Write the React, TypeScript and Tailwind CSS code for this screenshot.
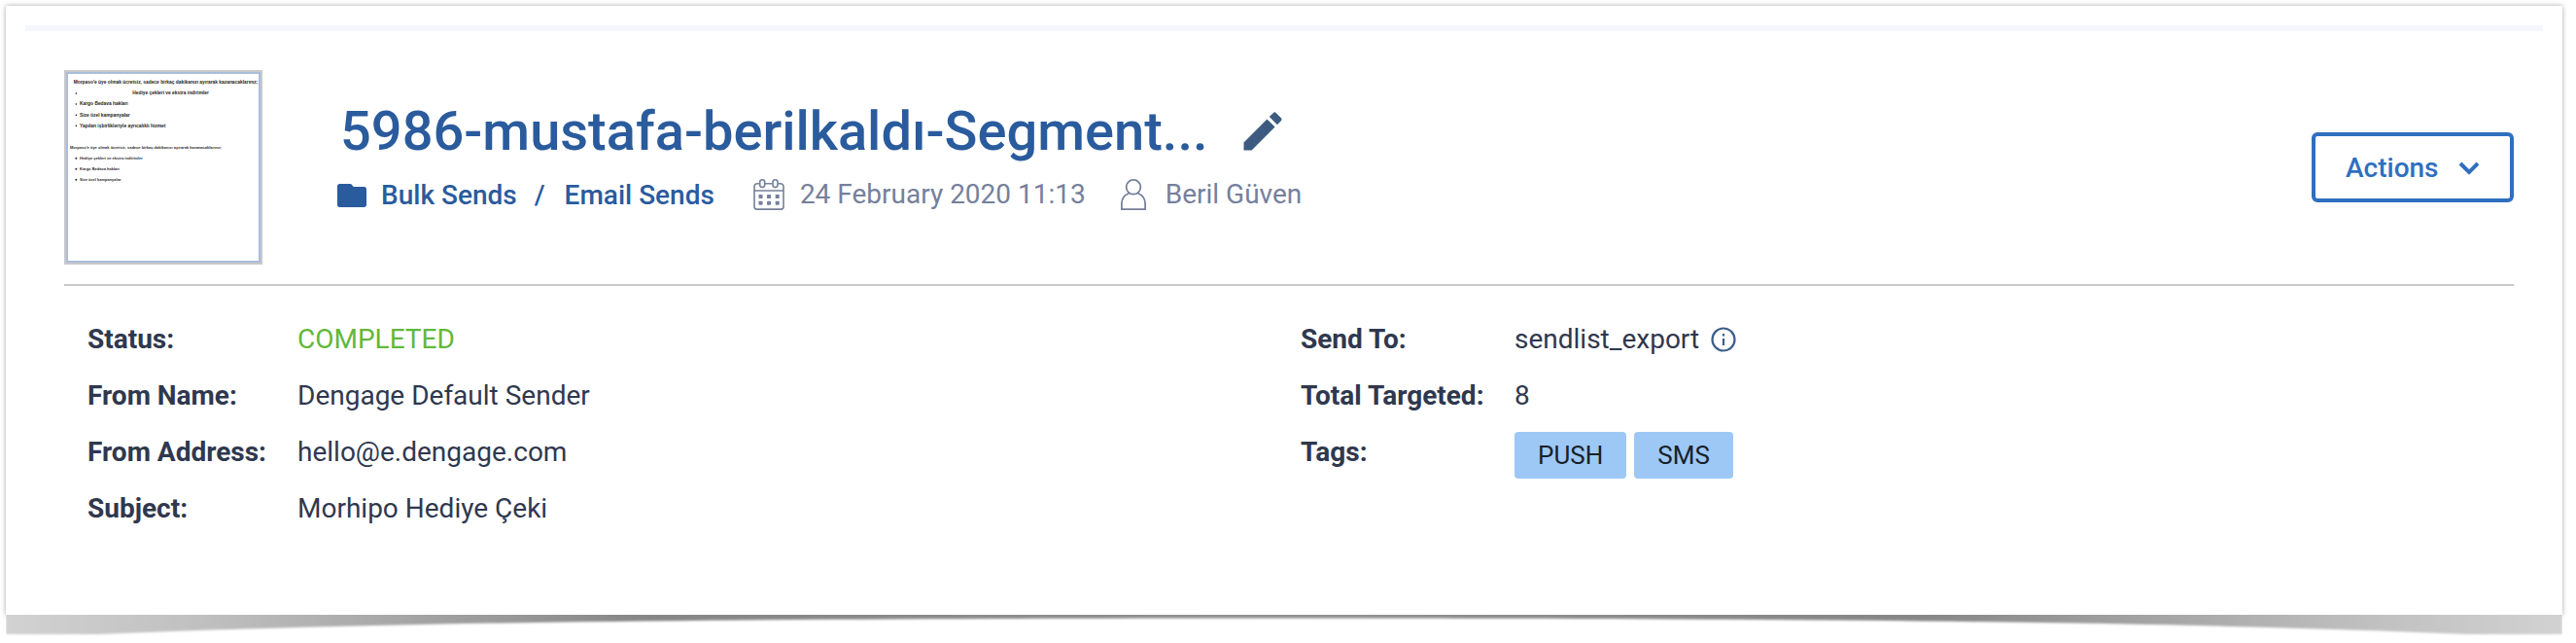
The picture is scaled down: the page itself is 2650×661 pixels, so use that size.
import type { ReactNode } from 'react';

const bulletsTop = [
  { y: 97, text: 'Kargo Bedava hakları' },
  { y: 131, text: 'Size özel kampanyalar' },
  { y: 164, text: 'Yapılan işbirlikleriyle ayrıcalıklı hizmet' },
];

const bulletsBottom = [
  { y: 264, text: 'Hediye çekleri ve ekstra indirimler' },
  { y: 297, text: 'Kargo Bedava hakları' },
  { y: 330, text: 'Size özel kampanyalar' },
];

function EmailThumbnail() {
  return (
    <div className="shrink-0 border-2 border-[#c9c9c9]">
      <svg
        viewBox="0 0 588 576"
        className="block h-[196px] w-[200px] border-2 border-[#a9bedb] bg-white font-['Liberation_Sans',sans-serif]"
        role="img"
        aria-label="Email preview"
      >
        <g fill="#1c1c1c" fontWeight="700" fontSize="14.6">
          <text x="17" y="30">Morpaso'e üye olmak ücretsiz, sadece birkaç dakikanızı ayırarak kazanacaklarınız;</text>
          <circle cx="25" cy="60" r="2.5" />
          <text x="199" y="63">Hediye çekleri ve ekstra indirimler</text>
          {bulletsTop.map((b) => (
            <g key={b.text}>
              <circle cx="25" cy={b.y - 4} r="2.5" />
              <text x="36" y={b.y}>{b.text}</text>
            </g>
          ))}
        </g>
        <g fill="#2c2c2c" fontWeight="700" fontSize="12">
          <text x="6" y="230">Morpaso'e üye olmak ücretsiz, sadece birkaç dakikanızı ayırarak kazanacaklarınız;</text>
          {bulletsBottom.map((b) => (
            <g key={b.text}>
              <circle cx="25" cy={b.y - 4} r="3" />
              <text x="36" y={b.y}>{b.text}</text>
            </g>
          ))}
        </g>
      </svg>
    </div>
  );
}

function PencilIcon() {
  return (
    <svg viewBox="0 0 24 24" className="size-[52px]" fill="#3d5b80" aria-hidden="true">
      <path d="M3 17.25V21h3.75L17.81 9.94l-3.75-3.75L3 17.25zM20.71 7.04a1 1 0 0 0 0-1.41l-2.34-2.34a1 1 0 0 0-1.41 0l-1.83 1.83 3.75 3.75 1.83-1.83z" />
    </svg>
  );
}

function FolderIcon() {
  return (
    <svg viewBox="0 0 24 24" className="size-9" fill="currentColor" aria-hidden="true">
      <path d="M3.6 4h7.2c.5 0 .9.2 1.2.6l1.1 1.4h7.3c.9 0 1.6.7 1.6 1.6v10.8c0 .9-.7 1.6-1.6 1.6H3.6c-.9 0-1.6-.7-1.6-1.6V5.6C2 4.700 2.700 4 3.600 4z" />
    </svg>
  );
}

function CalendarIcon() {
  return (
    <svg viewBox="0 0 32 32" className="size-8" fill="none" stroke="currentColor" strokeWidth="1.6" aria-hidden="true">
      <path d="M6.700 4.700H4a3 3 0 0 0-3 3V28.500a2.600 2.600 0 0 0 2.600 2.600h24.800a2.600 2.600 0 0 0 2.600-2.600V7.700a3 3 0 0 0-3-3h-2.700M12 4.700h7.700M1 12h30" />
      <rect x="6.700" y=".8" width="5" height="7.800" rx="2.500" />
      <rect x="20" y=".8" width="5" height="7.800" rx="2.500" />
      <g fill="currentColor" stroke="none">
        <rect x="5.500" y="16" width="4" height="4" rx=".6" />
        <rect x="14" y="16" width="4" height="4" rx=".6" />
        <rect x="22.700" y="16" width="4" height="4" rx=".6" />
        <rect x="5.500" y="22.700" width="4" height="4" rx=".6" />
        <rect x="14" y="22.700" width="4" height="4" rx=".6" />
        <rect x="22.700" y="22.700" width="4" height="4" rx=".6" />
      </g>
    </svg>
  );
}

function PersonIcon() {
  return (
    <svg viewBox="0 0 26 32" className="h-8 w-[26px]" fill="none" stroke="currentColor" strokeWidth="1.8" aria-hidden="true">
      <circle cx="13" cy="8.300" r="7.400" />
      <path d="M8.600 14.500C4 16.500.9 20 .9 25v6.100h24.200V25c0-5-3.100-8.500-7.700-10.500" />
    </svg>
  );
}

function InfoIcon() {
  return (
    <svg viewBox="0 0 26 26" className="size-[26px]" fill="none" stroke="currentColor" strokeWidth="2.200" aria-hidden="true">
      <circle cx="13" cy="13" r="11.500" />
      <path d="M13 12v7M13 7v2.600" />
    </svg>
  );
}

function Row({ label, children }: { label: string; children: ReactNode }) {
  return (
    <div className="contents">
      <dt className="h-[58px] font-bold">{label}</dt>
      <dd className="h-[58px]">{children}</dd>
    </div>
  );
}

function Tag({ children }: { children: ReactNode }) {
  return (
    <span className="rounded bg-[#9dc8f6] px-6 text-[26px] leading-[48px] text-[#17212b]">{children}</span>
  );
}

function BottomShadow() {
  return (
    <svg viewBox="0 0 2630 28" preserveAspectRatio="none" className="block h-7 w-full" aria-hidden="true">
      <defs>
        <linearGradient id="shade" x1="0" x2="1" y1="0" y2="0">
          <stop offset="0" stopColor="#d2d2d2" />
          <stop offset=".08" stopColor="#bfbfbf" />
          <stop offset=".16" stopColor="#a4a4a4" />
          <stop offset=".25" stopColor="#868686" />
          <stop offset=".5" stopColor="#909090" />
          <stop offset=".75" stopColor="#868686" />
          <stop offset=".84" stopColor="#a4a4a4" />
          <stop offset=".92" stopColor="#bfbfbf" />
          <stop offset="1" stopColor="#d2d2d2" />
        </linearGradient>
        <filter id="soft" x="-1%" y="-50%" width="102%" height="200%">
          <feGaussianBlur stdDeviation="1" />
        </filter>
      </defs>
      <path
        d="M0 -10H2630V20H2535C2250 8 1900 3.500 1315 3.500S380 8 95 20H0Z"
        fill="url(#shade)"
        filter="url(#soft)"
      />
    </svg>
  );
}

export default function App() {
  return (
    <div className="bg-white pt-1.5 pr-3.5 pl-1.5 font-[Roboto,sans-serif] text-[28px] text-[#2f384e]">
      <main className="bg-white px-5 pt-5 pb-20 shadow-[0_0_5px_rgba(0,0,0,0.35)]">
        <div className="h-1.5 bg-[#f4f6fc]" />
        <div className="pr-[30px] pl-10">
          <header className="flex items-center border-b-2 border-[#c9c9c9] pt-10 pb-5">
            <EmailThumbnail />
            <div className="ml-[74px] min-w-0 self-start pt-[31px]">
              <div className="flex items-center gap-[30px] pl-1.5">
                <h1 className="truncate text-[56px] leading-[64px] font-medium text-[#2a5b9d]">
                  5986-mustafa-berilkaldı-Segment...
                </h1>
                <button type="button" aria-label="Edit name">
                  <PencilIcon />
                </button>
              </div>
              <div className="mt-3.5 flex items-center leading-9 text-[#75809b]">
                <nav aria-label="Folder" className="flex items-center pt-0.5 font-medium text-[#2a5b9d]">
                  <FolderIcon />
                  <a href="#bulk" className="ml-3">Bulk Sends</a>
                  <span className="mx-[18px]">/</span>
                  <a href="#email" className="ml-0.5">Email Sends</a>
                </nav>
                <span className="ml-10 flex items-center gap-4">
                  <CalendarIcon />
                  <time dateTime="2020-02-24T11:13">24 February 2020 11:13</time>
                </span>
                <span className="ml-9 flex items-center gap-5">
                  <PersonIcon />
                  Beril Güven
                </span>
              </div>
            </div>
            <button
              type="button"
              className="ml-auto flex h-[72px] w-[208px] shrink-0 items-center gap-5 rounded-md border-4 border-[#2f6fbf] pt-0.5 pl-[31px] font-medium text-[#2f6fbf]"
            >
              Actions
              <svg viewBox="0 0 22 16" className="h-4 w-[22px]" fill="none" stroke="currentColor" strokeWidth="4" aria-hidden="true">
                <path d="M2 3l9 9 9-9" />
              </svg>
            </button>
          </header>
          <div className="grid grid-cols-2 pt-[26px] pl-6 leading-[58px]">
            <dl className="grid grid-cols-[216px_1fr] content-start">
              <Row label="Status:"><span className="text-[#62b83a]">COMPLETED</span></Row>
              <Row label="From Name:">Dengage Default Sender</Row>
              <Row label="From Address:">hello@e.dengage.com</Row>
              <Row label="Subject:">Morhipo Hediye Çeki</Row>
            </dl>
            <dl className="grid grid-cols-[220px_1fr] content-start">
              <Row label="Send To:">
                <span className="flex items-center gap-3">
                  sendlist_export
                  <button type="button" aria-label="Send list details" className="text-[#3d5f8a]">
                    <InfoIcon />
                  </button>
                </span>
              </Row>
              <Row label="Total Targeted:">8</Row>
              <Row label="Tags:">
                <span className="flex gap-2 pt-2">
                  <Tag>PUSH</Tag>
                  <Tag>SMS</Tag>
                </span>
              </Row>
            </dl>
          </div>
        </div>
      </main>
      <BottomShadow />
    </div>
  );
}
